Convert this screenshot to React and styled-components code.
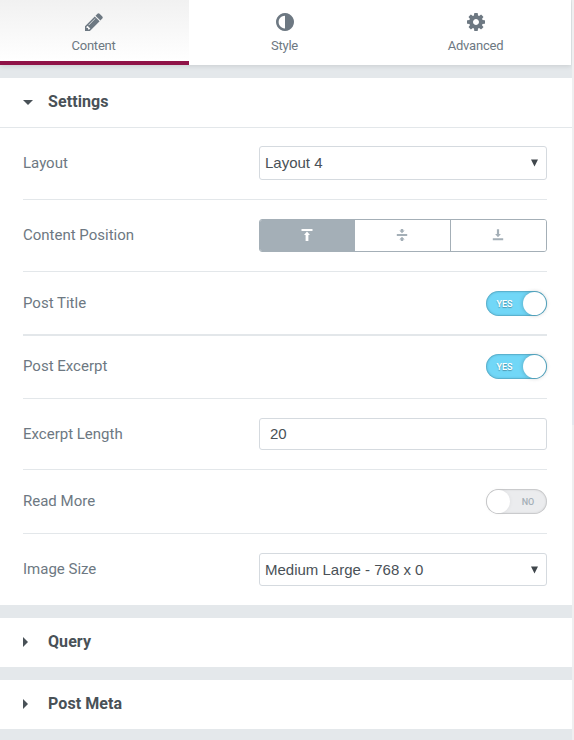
import React from "react";
import styled, { createGlobalStyle } from "styled-components";

const GlobalStyle = createGlobalStyle`
  * {
    box-sizing: border-box;
  }
  body {
    margin: 0;
    background: #e4e8eb;
    font-family: Roboto, sans-serif;
    color: #6d7882;
  }
`;

const Page = styled.div`
  display: flex;
  height: 740px;
  overflow: hidden;
`;

const Panel = styled.main`
  width: 572px;
`;

const Rail = styled.aside`
  width: 2px;
  background: linear-gradient(#efeff0 0 360px, #e4e8ee 360px 425px, #efeff0 425px);
`;

const Tabs = styled.nav`
  display: flex;
  width: 571px;
  height: 65px;
  margin-bottom: 13px;
  background: #fff;
  box-shadow: 0 1px 5px rgba(0, 0, 0, 0.12);
`;

const Tab = styled.button`
  width: ${(p) => (p.$active ? "189px" : "191px")};
  display: flex;
  flex-direction: column;
  align-items: center;
  padding: 13px ${(p) => (p.$active ? "2px" : 0)} 0 0;
  gap: 6px;
  border: 0;
  border-bottom: 4px solid ${(p) => (p.$active ? "#8f1247" : "transparent")};
  background: ${(p) =>
    p.$active ? "linear-gradient(#f1f1f1, #fff) padding-box" : "none"};
  color: #6d7882;
  font: 13px/17px Roboto, sans-serif;
  letter-spacing: -0.22px;

  svg {
    display: block;
    width: 18px;
    height: 18px;
  }
`;

const Section = styled.section`
  margin-bottom: 13px;
  background: #fff;
`;

const SectionTitle = styled.h2`
  display: flex;
  align-items: center;
  height: 49px;
  margin: 0;
  padding: 0 0 2px 23px;
  color: #495157;
  font-size: 16px;
  font-weight: 700;
  letter-spacing: 0.08px;
`;

const Caret = styled.span`
  width: 25px;
  padding-top: 1px;

  &::before {
    content: "";
    display: block;
    width: 0;
    border: 5px solid transparent;
    ${(p) =>
      p.$open
        ? "border-top-color: #495157; border-bottom: 0;"
        : "border-left-color: #495157; border-right: 0;"}
  }
`;

const Controls = styled.div`
  padding: 0 25px 0 23px;
  border-top: 1px solid #e3e7ea;
`;

const Row = styled.div`
  display: flex;
  align-items: flex-start;
  justify-content: space-between;
  height: ${(p) => p.$height}px;
  padding-top: ${(p) => p.$top}px;
  border-bottom: ${(p) => p.$line ?? 1}px solid #e3e7ea;
`;

const Label = styled.span`
  padding-top: ${(p) => p.$top}px;
  font-size: 15px;
  line-height: 18px;
`;

const Field = styled.div`
  display: flex;
  align-items: center;
  justify-content: space-between;
  width: 288px;
  height: ${(p) => p.$height}px;
  padding: 0 7px 0 ${(p) => p.$indent ?? 5}px;
  border: 1px solid #d5dadf;
  border-radius: 3px;
  color: #495157;
  font-family: "Liberation Sans", Arial, sans-serif;
  font-size: 15px;
  line-height: 18px;
`;

const Choices = styled.div`
  display: grid;
  grid-template-columns: 95px 95px 96px;
  width: 288px;
  height: 33px;
  border: 1px solid #a4afb7;
  border-radius: 3px;
  overflow: hidden;
`;

const Choice = styled.button`
  display: flex;
  align-items: center;
  justify-content: center;
  padding: 0 2px 2px 0;
  border: 0;
  background: ${(p) => (p.$active ? "#a4afb7" : "#fff")};
  color: ${(p) => (p.$active ? "#fff" : "#a4afb7")};

  &:last-child {
    border-left: 1px solid #a4afb7;
  }
`;

const Switch = styled.div`
  display: flex;
  flex-direction: ${(p) => (p.$on ? "row" : "row-reverse")};
  align-items: center;
  width: 61px;
  height: 25px;
  padding: 1px;
  border-radius: 13px;
  background: ${(p) => (p.$on ? "#71d7f7" : "#ebecee")};
  box-shadow: inset 0 0 3px
      ${(p) => (p.$on ? "rgba(0, 50, 70, 0.38)" : "rgba(0, 0, 0, 0.2)")},
    inset 0 0 0 1px rgba(0, 0, 0, 0.07);
`;

const SwitchText = styled.span`
  flex: 1;
  padding-right: ${(p) => (p.$on ? "1px" : 0)};
  text-align: center;
  font-size: 9px;
  font-weight: 500;
  line-height: 22px;
  color: ${(p) => (p.$on ? "#fff" : "#a4afb7")};
  text-shadow: ${(p) => (p.$on ? "0 1px 1px rgba(0, 0, 0, 0.3)" : "none")};
`;

const Knob = styled.span`
  width: 23px;
  height: 23px;
  border-radius: 50%;
  background: #fff;
  box-shadow: 0 0 4px rgba(0, 0, 0, ${(p) => (p.$on ? 0.25 : 0.06)});
`;

const icons = {
  pencil:
    "M363 1536l91-91-235-235-91 91v107h128v128h107zm523-928q0-22-22-22-10 0-17 7l-542 542q-7 7-7 17 0 22 22 22 10 0 17-7l542-542q7-7 7-17zm-54-192l416 416-832 832h-416v-416zm683 96q0 53-37 90l-166 166-416-416 166-165q36-38 90-38 53 0 91 38l235 234q37 39 37 91z",
  adjust:
    "M768 1440v-1088q-148 0-273 73t-198 198-73 273 73 273 198 198 273 73zm768-544q0 209-103 385.5t-279.5 279.5-385.5 103-385.5-103-279.5-279.5-103-385.5 103-385.5 279.5-279.5 385.5-103 385.5 103 279.5 279.5 103 385.5z",
  cog: "M1024 896q0-106-75-181t-181-75-181 75-75 181 75 181 181 75 181-75 75-181zm512-109v222q0 12-8 23t-20 13l-185 28q-19 54-39 91 35 50 107 138 10 12 10 25t-9 23q-27 37-99 108t-94 71q-12 0-26-9l-138-108q-44 23-91 38-16 136-29 186-7 28-36 28h-222q-14 0-24.5-8.5t-11.5-21.5l-28-184q-49-16-90-37l-141 107q-10 9-25 9-14 0-25-11-126-114-165-168-7-10-7-23 0-12 8-23 15-21 51-66.5t54-70.5q-27-50-41-99l-183-27q-13-2-21-12.5t-8-23.5v-222q0-12 8-23t19-13l186-28q14-46 39-92-40-57-107-138-10-12-10-24 0-10 9-23 26-36 98.5-107.5t94.5-71.5q13 0 26 10l138 107q44-23 91-38 16-136 29-186 7-28 36-28h222q14 0 24.5 8.5t11.5 21.5l28 184q49 16 90 37l142-107q9-9 24-9 13 0 25 10 129 119 165 170 7 8 7 22 0 12-8 23-15 21-51 66.5t-54 70.5q26 50 41 98l183 28q13 2 21 12.5t8 23.5z",
};

const alignTop = "M.5 1h11v2H.5zM6 3.6L9 7H7.4v6H4.6V7H3z";
const alignMiddle = "M.8 6h10.4v2H.8zM4.8 1h2.4v1.5h1.5L6 5.2 3.3 2.5h1.5zM6 8.8l2.7 2.7H7.2V13H4.8v-1.5H3.3z";
const alignBottom = "M.8 10.3h10.4v2H.8zM4.9 1.3h2.2v4.8h1.8L6 9.3 3.1 6.1h1.8z";

function TabIcon({ name }) {
  return (
    <svg viewBox="0 128 1536 1536" fill="currentColor">
      <path d={icons[name]} />
    </svg>
  );
}

function AlignIcon({ d }) {
  return (
    <svg width="12" height="14" viewBox="0 0 12 14" fill="currentColor">
      <path d={d} />
    </svg>
  );
}

function Toggle({ on }) {
  return (
    <Switch $on={on} role="switch" aria-checked={on}>
      <SwitchText $on={on}>{on ? "YES" : "NO"}</SwitchText>
      <Knob $on={on} />
    </Switch>
  );
}

function Select({ children, height }) {
  return (
    <Field $height={height}>
      {children}
      <svg width="9" height="8" viewBox="0 0 9 8">
        <path d="M1 .5h7L4.5 7.5z" fill="#40474c" />
      </svg>
    </Field>
  );
}

function App() {
  return (
    <Page>
      <GlobalStyle />
      <Panel>
        <Tabs>
          <Tab $active>
            <TabIcon name="pencil" />
            Content
          </Tab>
          <Tab>
            <TabIcon name="adjust" />
            Style
          </Tab>
          <Tab>
            <TabIcon name="cog" />
            Advanced
          </Tab>
        </Tabs>

        <Section>
          <SectionTitle>
            <Caret $open />
            Settings
          </SectionTitle>
          <Controls>
            <Row $height={72} $top={18}>
              <Label $top={8}>Layout</Label>
              <Select height={34}>Layout 4</Select>
            </Row>
            <Row $height={72} $top={19}>
              <Label $top={7}>Content Position</Label>
              <Choices>
                <Choice $active>
                  <AlignIcon d={alignTop} />
                </Choice>
                <Choice>
                  <AlignIcon d={alignMiddle} />
                </Choice>
                <Choice>
                  <AlignIcon d={alignBottom} />
                </Choice>
              </Choices>
            </Row>
            <Row $height={64} $top={19} $line={2}>
              <Label $top={3}>Post Title</Label>
              <Toggle on />
            </Row>
            <Row $height={63} $top={18}>
              <Label $top={3}>Post Excerpt</Label>
              <Toggle on />
            </Row>
            <Row $height={71} $top={19}>
              <Label $top={7}>Excerpt Length</Label>
              <Field $height={32} $indent={10}>
                20
              </Field>
            </Row>
            <Row $height={64} $top={19}>
              <Label $top={3}>Read More</Label>
              <Toggle on={false} />
            </Row>
            <Row $height={71} $top={19} $line={0}>
              <Label $top={7}>Image Size</Label>
              <Select height={33}>Medium Large - 768 x 0</Select>
            </Row>
          </Controls>
        </Section>

        <Section>
          <SectionTitle>
            <Caret />
            Query
          </SectionTitle>
        </Section>
        <Section>
          <SectionTitle>
            <Caret />
            Post Meta
          </SectionTitle>
        </Section>
      </Panel>
      <Rail />
    </Page>
  );
}

export default App;
